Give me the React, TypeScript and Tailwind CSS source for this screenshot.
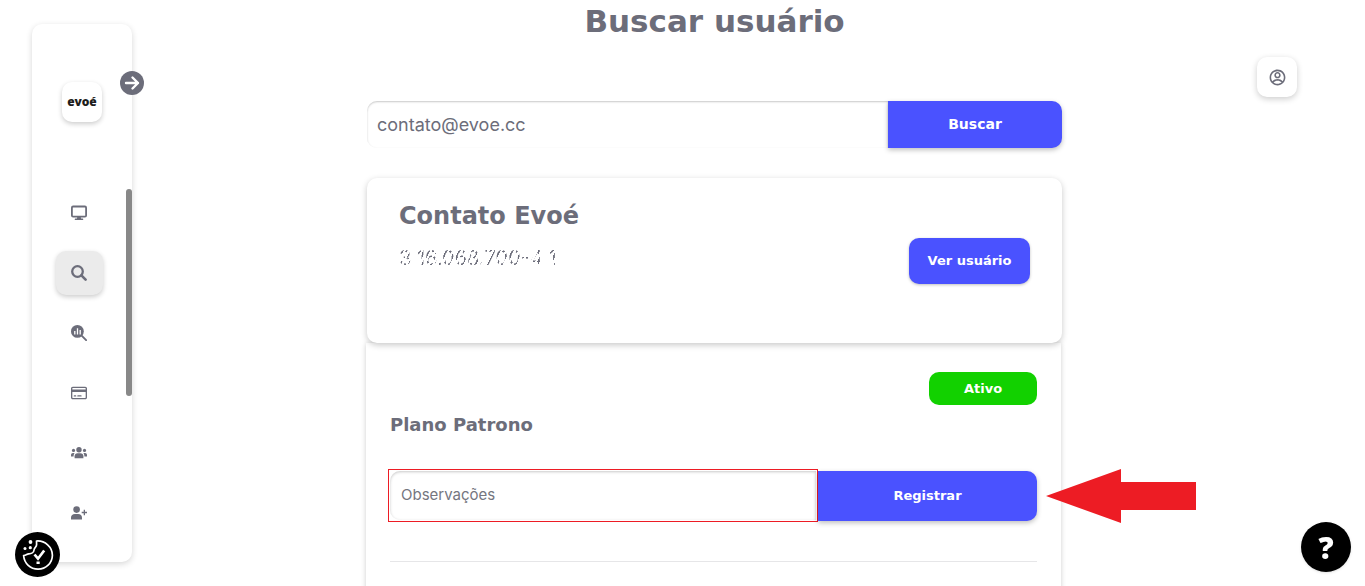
import type { ReactNode } from 'react'
import { FaRegCreditCard } from 'react-icons/fa6'
import { RiAccountCircleLine } from 'react-icons/ri'

const MonitorIcon = () => (
  <svg viewBox="0 0 16 16" className="size-4" fill="none">
    <rect
      x="0.9"
      y="1.5"
      width="14.2"
      height="10.2"
      rx="1.2"
      stroke="currentColor"
      strokeWidth="1.8"
    />
    <path
      d="M6.4 11.5h3.2l.5 1.9h1.500c.9 0 .9 1.700 0 1.700H4.400c-.9 0-.9-1.700 0-1.700h1.500z"
      fill="currentColor"
    />
  </svg>
)

const SearchIcon = () => (
  <svg viewBox="0 0 16 16" className="size-4" fill="none" stroke="currentColor">
    <circle cx="6.5" cy="6.5" r="5.3" strokeWidth="2.3" />
    <path d="M10.4 10.4l4.2 4.2" strokeWidth="2.6" strokeLinecap="round" />
  </svg>
)

const SearchChartIcon = () => (
  <svg viewBox="0 0 16 16" className="size-4" fill="none">
    <circle cx="6.4" cy="6.4" r="6.4" fill="currentColor" />
    <path
      d="M10.4 10.4l4.7 4.7"
      stroke="currentColor"
      strokeWidth="1.9"
      strokeLinecap="round"
    />
    <path d="M3.8 6v3.4M6.5 3.2v6.2M9.2 5v4.4" stroke="white" strokeWidth="1.3" />
  </svg>
)

const GroupIcon = () => (
  <svg viewBox="0 0 16 16" className="size-4" fill="currentColor">
    <circle cx="8" cy="4.8" r="2.7" />
    <circle cx="2.5" cy="5.4" r="1.6" />
    <circle cx="13.5" cy="5.4" r="1.6" />
    <path d="M3.6 13.3v-2.1c0-1.8 1.2-3 3-3h2.8c1.8 0 3 1.2 3 3v2.1z" />
    <path d="M2 7.9h1.6c-.7.9-1 2-1 3.5H0V10c0-1.2.8-2.1 2-2.1zM14 7.9h-1.6c.7.9 1 2 1 3.5H16V10c0-1.2-.8-2.1-2-2.1z" />
  </svg>
)

const AddUserIcon = () => (
  <svg viewBox="0 0 16 16" className="size-4" fill="currentColor">
    <circle cx="5.6" cy="4.6" r="3.3" />
    <path d="M0 14.4v-1.8C0 10.4 1.7 9 3.8 9h3.4c2.2 0 3.8 1.4 3.8 3.6v1.8z" />
    <path d="M12.7 4.8H14v2h2v1.400h-2v2h-1.300v-2h-2V6.800h2z" />
  </svg>
)

const CookieIcon = () => (
  <svg viewBox="0 0 45 45" className="size-[45px]" fill="none">
    <circle cx="22.5" cy="22.5" r="22.5" fill="black" />
    <path
      d="M21.5 9c8.5-.6 15.900 6 15.900 14.200A14.200 14.200 0 0 1 23 37.200c-7.600 0-13.700-5.600-14.400-13.700 2.700-.2 3.300-1.600 5-1.700 2.600.1 5.300-1.200 5.500-4 .1-2.500 2.600-2.600 2.500-5.300z"
      stroke="white"
      strokeWidth="1.7"
      strokeLinejoin="round"
    />
    <path d="M19.5 22.5l3.5 4.200 6.200-8.200" stroke="white" strokeWidth="2.7" />
    <rect x="21.5" y="29.5" width="3.2" height="2.5" fill="white" />
    <circle cx="15.5" cy="10" r="1.9" fill="white" />
    <circle cx="10" cy="16.5" r="1.5" fill="white" />
    <circle cx="15.3" cy="15.7" r="1.6" fill="white" />
  </svg>
)

type NavItemProps = {
  label: string
  icon: ReactNode
  active?: boolean
}

const NavItem = ({ label, icon, active }: NavItemProps) => (
  <a
    href="#"
    aria-label={label}
    className={
      active
        ? 'flex h-11 w-[47px] items-center justify-center rounded-[10px] bg-[#ebebeb] shadow-[0_2px_5px_rgba(0,0,0,0.2)]'
        : 'flex h-11 w-[47px] items-center justify-center'
    }
  >
    {icon}
  </a>
)

const Sidebar = () => {
  const items = [
    { label: 'Painel', icon: <MonitorIcon /> },
    { label: 'Buscar', icon: <SearchIcon />, active: true },
    { label: 'Relatórios', icon: <SearchChartIcon /> },
    { label: 'Pagamentos', icon: <FaRegCreditCard className="size-4" /> },
    { label: 'Grupos', icon: <GroupIcon /> },
    { label: 'Adicionar', icon: <AddUserIcon /> }
  ]

  return (
    <aside className="relative my-6 ml-8 w-[100px] shrink-0 rounded-[10px] bg-white shadow-[0_2px_6px_rgba(0,0,0,0.16)]">
      <a
        href="#"
        className="mx-auto mt-[58px] flex size-10 items-center justify-center rounded-[10px] font-['Noto_Sans'] text-[12px] font-black text-[#1d1d1b] shadow-[0_2px_5px_rgba(0,0,0,0.2)]"
      >
        evoé
      </a>
      <nav className="mt-[69px] flex flex-col items-center gap-4 pr-1.5">
        {items.map((item) => (
          <NavItem key={item.label} {...item} />
        ))}
      </nav>
      <div className="absolute top-[165px] right-0 h-[207px] w-1.5 rounded-full bg-[#888888]" />
      <button
        type="button"
        aria-label="Expandir"
        className="absolute top-[47px] -right-3 flex size-6 items-center justify-center rounded-full bg-[#6c6d7a] text-white"
      >
        <svg viewBox="0 0 24 24" className="size-6" fill="none">
          <path
            d="M6 12h12M12.5 6.500L18 12l-5.500 5.500"
            stroke="currentColor"
            strokeWidth="2.4"
            strokeLinecap="round"
            strokeLinejoin="round"
          />
        </svg>
      </button>
    </aside>
  )
}

export default function App() {
  return (
    <div className="flex h-screen overflow-hidden bg-white font-['DejaVu_Sans',sans-serif] text-[#6c6d7a]">
      <Sidebar />

      <div className="mr-[68px] flex flex-1 items-start">
        <div className="w-10 shrink-0" />
        <main className="mx-auto w-full max-w-[695px]">
          <h1 className="text-center text-[31px] leading-[42px] font-bold">
            Buscar usuário
          </h1>

          <form className="mt-[59px] flex h-[47px]">
            <input
              type="text"
              aria-label="E-mail"
              defaultValue="contato@evoe.cc"
              className="min-w-0 flex-1 rounded-l-[10px] px-2.5 font-[Inter] text-[18px] shadow-[inset_0_1px_2px_rgba(0,0,0,0.22)] outline-none"
            />
            <button
              type="button"
              className="w-[174px] rounded-r-[10px] bg-[#4a52ff] text-[14px] font-bold text-white shadow-[0_2px_5px_rgba(0,0,0,0.25)]"
            >
              Buscar
            </button>
          </form>

          <section className="relative mt-[30px] flex h-[165px] items-center justify-between rounded-[10px] bg-white px-8 shadow-[0_2px_6px_rgba(0,0,0,0.22)]">
            <div className="self-start pt-[22px]">
              <h2 className="text-2xl font-bold">Contato Evoé</h2>
              <p className="mt-3.5 bg-[repeating-linear-gradient(115deg,#6c6d7a_0_2px,transparent_2px_4px)] bg-clip-text font-[Inter] text-[20px] leading-6 text-transparent">
                3 16.068.700-4 1
              </p>
            </div>
            <button
              type="button"
              className="h-[46px] w-[121px] rounded-[10px] bg-[#4a52ff] text-[13px] font-bold text-white shadow-[0_1px_3px_rgba(0,0,0,0.25)]"
            >
              Ver usuário
            </button>
          </section>

          <section className="-ml-px h-[300px] w-full px-6 pt-[29px] shadow-[0_1px_5px_rgba(0,0,0,0.2)]">
            <div className="flex justify-end">
              <span className="flex h-[33px] w-[108px] items-center justify-center rounded-[10px] bg-[#12d100] text-[13px] font-bold text-white">
                Ativo
              </span>
            </div>
            <h3 className="mt-1.5 text-lg font-bold">Plano Patrono</h3>
            <form className="mt-8 flex h-[50px]">
              <div className="-my-0.5 -ml-0.5 flex h-[53px] min-w-0 flex-1 border border-[#ed1c24] p-px">
                <input
                  type="text"
                  aria-label="Observações"
                  placeholder="Observações"
                  className="w-full rounded-l-[10px] px-[11px] font-[Inter] text-[15px] shadow-[inset_0_1px_3px_rgba(0,0,0,0.22)] outline-none placeholder:text-[#75767f]"
                />
              </div>
              <button
                type="button"
                className="w-[219px] rounded-r-[10px] bg-[#4a52ff] text-[13px] font-bold text-white shadow-[0_2px_5px_rgba(0,0,0,0.25)]"
              >
                Registrar
              </button>
            </form>
            <hr className="mt-10 border-[#e6e6e8]" />
          </section>
        </main>
        <button
          type="button"
          aria-label="Minha conta"
          className="mt-[57px] flex size-10 shrink-0 items-center justify-center rounded-[10px] bg-white shadow-[0_2px_6px_rgba(0,0,0,0.2)]"
        >
          <RiAccountCircleLine className="size-[19px]" />
        </button>
      </div>

      <svg
        viewBox="0 0 150 54"
        className="absolute top-[469px] left-[1046px] h-[54px] w-[150px]"
        fill="#ed1c24"
      >
        <path d="M0 27L75 0v13h75v28H75v13z" />
      </svg>
      <button
        type="button"
        aria-label="Preferências de cookies"
        className="fixed bottom-[9px] left-[15px] rounded-full"
      >
        <CookieIcon />
      </button>
      <button
        type="button"
        aria-label="Ajuda"
        className="fixed right-3.5 bottom-3.5 flex size-[50px] items-center justify-center rounded-full bg-black font-['Noto_Sans'] text-[30px] font-black text-white shadow-sm"
      >
        ?
      </button>
    </div>
  )
}
